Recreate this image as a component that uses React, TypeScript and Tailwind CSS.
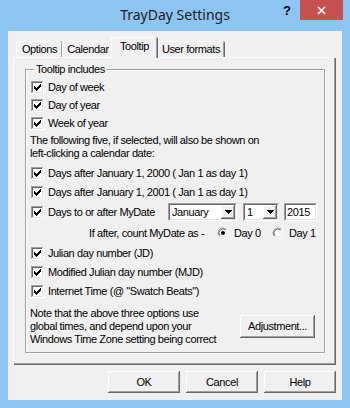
import React from "react";

const CHECK_PX: [number, number][] = [
  [6, 0], [5, 1], [6, 1], [0, 2], [4, 2], [5, 2], [6, 2],
  [0, 3], [1, 3], [3, 3], [4, 3], [5, 3],
  [0, 4], [1, 4], [2, 4], [3, 4], [4, 4],
  [1, 5], [2, 5], [3, 5], [2, 6],
];

function CheckBox() {
  return (
    <svg width="13" height="13" viewBox="0 0 13 13" shapeRendering="crispEdges" className="shrink-0">
      <rect x="0" y="0" width="13" height="13" fill="#ffffff" />
      <rect x="0" y="0" width="12" height="1" fill="#a0a0a0" />
      <rect x="0" y="0" width="1" height="12" fill="#a0a0a0" />
      <rect x="1" y="1" width="10" height="1" fill="#696969" />
      <rect x="1" y="1" width="1" height="10" fill="#696969" />
      <rect x="1" y="11" width="11" height="1" fill="#e3e3e3" />
      <rect x="11" y="1" width="1" height="11" fill="#e3e3e3" />
      {CHECK_PX.map(([x, y]) => (
        <rect key={x + "-" + y} x={x + 3} y={y + 3} width="1" height="1" fill="#000" />
      ))}
    </svg>
  );
}

function Radio({ on }: { on: boolean }) {
  return (
    <svg width="12" height="12" viewBox="0 0 12 12" className="shrink-0">
      <circle cx="6" cy="6" r="4.5" fill="#ffffff" />
      <path d="M2.46 9.54 A5 5 0 0 1 9.54 2.46" stroke="#a0a0a0" fill="none" />
      <path d="M9.54 2.46 A5 5 0 0 1 2.46 9.54" stroke="#ffffff" fill="none" />
      <path d="M3.17 8.83 A4 4 0 0 1 8.83 3.17" stroke="#696969" fill="none" />
      <path d="M8.83 3.17 A4 4 0 0 1 3.17 8.83" stroke="#e3e3e3" fill="none" />
      {on && <circle cx="6" cy="6" r="2" fill="#000" />}
    </svg>
  );
}

function Row({ h, children }: { h: string; children: React.ReactNode }) {
  return <div className={"flex items-center " + h}>{children}</div>;
}

function CheckRow({ h, label }: { h: string; label: string }) {
  return (
    <Row h={h}>
      <div className="ml-[1px] flex items-center">
        <CheckBox />
      </div>
      <span className="ml-[4px] whitespace-nowrap">{label}</span>
    </Row>
  );
}

function Combo({ w, text }: { w: string; text: string }) {
  return (
    <div className={"flex h-[18px] border border-t-[#a0a0a0] border-l-[#a0a0a0] border-r-white border-b-white " + w}>
      <div className="flex flex-1 items-stretch border border-t-[#696969] border-l-[#696969] border-r-[#e3e3e3] border-b-[#e3e3e3] bg-white">
        <span className="flex flex-1 items-center pl-[2px] leading-none">{text}</span>
        <div className="flex w-[14px] items-center justify-center bg-[#f0f0f0] shadow-[inset_-1px_-1px_0_#696969,inset_1px_1px_0_#ffffff,inset_-2px_-2px_0_#a0a0a0]">
          <svg width="7" height="4" viewBox="0 0 7 4" shapeRendering="crispEdges">
            <rect x="0" y="0" width="7" height="1" fill="#000" />
            <rect x="1" y="1" width="5" height="1" fill="#000" />
            <rect x="2" y="2" width="3" height="1" fill="#000" />
            <rect x="3" y="3" width="1" height="1" fill="#000" />
          </svg>
        </div>
      </div>
    </div>
  );
}

function Btn({ w, h, label }: { w: string; h: string; label: string }) {
  return (
    <div
      className={
        "flex items-center justify-center bg-[#f0f0f0] shadow-[inset_-1px_-1px_0_#696969,inset_1px_1px_0_#ffffff,inset_-2px_-2px_0_#a0a0a0,inset_2px_2px_0_#f0f0f0] " +
        w +
        " " +
        h
      }
    >
      {label}
    </div>
  );
}

function Tab({ label, selected, w }: { label: string; selected?: boolean; w: string }) {
  if (selected) {
    return (
      <div
        className={
          "relative z-10 -mb-px -ml-[2px] flex h-[21px] items-start justify-center rounded-t-[2px] border-l border-t border-l-white border-t-white bg-[#f0f0f0] pt-[2px] shadow-[inset_-1px_0_0_#a0a0a0,1px_0_0_#696969] " +
          w
        }
      >
        {label}
      </div>
    );
  }
  return (
    <div
      className={
        "flex h-[16px] items-center justify-center rounded-t-[2px] border-l border-t border-l-white border-t-white bg-[#f0f0f0] shadow-[inset_-1px_0_0_#a0a0a0,1px_0_0_#696969] " +
        w
      }
    >
      {label}
    </div>
  );
}

export default function App() {
  return (
    <div className="flex h-[408px] w-[350px] flex-col bg-[#8dc4f2] font-['Liberation_Sans',Arial,sans-serif] text-[11px] leading-[13px] tracking-[-0.4px] text-black">
      {/* title bar */}
      <div className="flex h-[31px] shrink-0">
        <div className="w-[69px]" />
        <div className="flex-1 text-center font-['Noto_Sans',sans-serif] text-[14px] leading-[30px] tracking-normal text-[#222222]">
          TrayDay Settings
        </div>
        <div className="flex w-[69px] items-start">
          <div className="flex h-[21px] w-[12px] items-center justify-center font-['Liberation_Sans',sans-serif] text-[13px] font-bold tracking-normal">
            ?
          </div>
          <div className="ml-[7px] flex h-[20px] w-[43px] items-center justify-center bg-[#c75050]">
            <svg width="9" height="9" viewBox="0 0 9 9">
              <path d="M1 1L8 8M8 1L1 8" stroke="#ffffff" strokeWidth="1.6" />
            </svg>
          </div>
        </div>
      </div>

      {/* client area */}
      <div className="mx-[8px] flex h-[369px] shrink-0 flex-col bg-[#f0f0f0]">
        {/* tabs */}
        <div className="ml-[8px] mt-[6px] flex h-[20px] items-end">
          <Tab label="Options" w="w-[46px]" />
          <Tab label="Calendar" w="w-[51px]" />
          <Tab label="Tooltip" w="w-[46px]" selected />
          <Tab label="User formats" w="w-[67px]" />
        </div>

        {/* panel */}
        <div className="ml-[5px] mr-[6px] flex h-[308px] flex-col border-l border-t border-l-white border-t-white shadow-[inset_-1px_-1px_0_#696969,inset_-2px_-2px_0_#a0a0a0] px-[11px] pt-[11px]">
          {/* group box */}
          <div className="relative border border-[#a0a0a0] pb-[6px] pl-[4px] shadow-[inset_1px_1px_0_#ffffff,1px_1px_0_#ffffff]">
            <span className="absolute -top-[7px] left-[8px] bg-[#f0f0f0] px-[2px] leading-[13px]">
              Tooltip includes
            </span>
            <div className="flex flex-col pt-[8px]">
              <CheckRow h="h-[18px]" label="Day of week" />
              <CheckRow h="h-[18px]" label="Day of year" />
              <CheckRow h="h-[18px]" label="Week of year" />
              <div className="mt-[2px] leading-[13px]">
                The following five, if selected, will also be shown on
                <br />
                left-clicking a calendar date:
              </div>
              <div className="mt-[4px]" />
              <CheckRow h="h-[19px]" label="Days after January 1, 2000 ( Jan 1 as day 1)" />
              <CheckRow h="h-[19px]" label="Days after January 1, 2001 ( Jan 1 as day 1)" />
              <Row h="h-[20px]">
                <div className="ml-[1px] flex items-center">
                  <CheckBox />
                </div>
                <span className="ml-[4px] w-[120px] whitespace-nowrap">Days to or after MyDate</span>
                <Combo w="w-[69px]" text="January" />
                <div className="w-[6px]" />
                <Combo w="w-[36px]" text="1" />
                <div className="w-[5px]" />
                <div className="flex h-[18px] w-[33px] border border-t-[#a0a0a0] border-l-[#a0a0a0] border-r-white border-b-white">
                  <div className="flex flex-1 items-center border border-t-[#696969] border-l-[#696969] border-r-[#e3e3e3] border-b-[#e3e3e3] bg-white pl-[1px]">
                    2015
                  </div>
                </div>
              </Row>
              <Row h="h-[22px]">
                <span className="ml-[59px] w-[128px] whitespace-nowrap">If after, count MyDate as -</span>
                <Radio on />
                <span className="ml-[5px] w-[38px] whitespace-nowrap">Day 0</span>
                <Radio on={false} />
                <span className="ml-[5px] whitespace-nowrap">Day 1</span>
              </Row>
              <CheckRow h="h-[19px]" label="Julian day number (JD)" />
              <CheckRow h="h-[18px]" label="Modified Julian day number (MJD)" />
              <CheckRow h="h-[20px]" label={'Internet Time (@ "Swatch Beats")'} />
              <div className="mt-[6px] flex items-center justify-between pr-[9px]">
                <div className="leading-[13px]">
                  Note that the above three options use
                  <br />
                  global times, and depend upon your
                  <br />
                  Windows Time Zone setting being correct
                </div>
                <Btn w="w-[75px]" h="h-[23px]" label="Adjustment..." />
              </div>
            </div>
          </div>
        </div>

        {/* bottom buttons */}
        <div className="mr-[6px] mt-[6px] flex justify-end gap-[6px]">
          <Btn w="w-[72px]" h="h-[22px]" label="OK" />
          <Btn w="w-[72px]" h="h-[22px]" label="Cancel" />
          <Btn w="w-[72px]" h="h-[22px]" label="Help" />
        </div>
      </div>
    </div>
  );
}
